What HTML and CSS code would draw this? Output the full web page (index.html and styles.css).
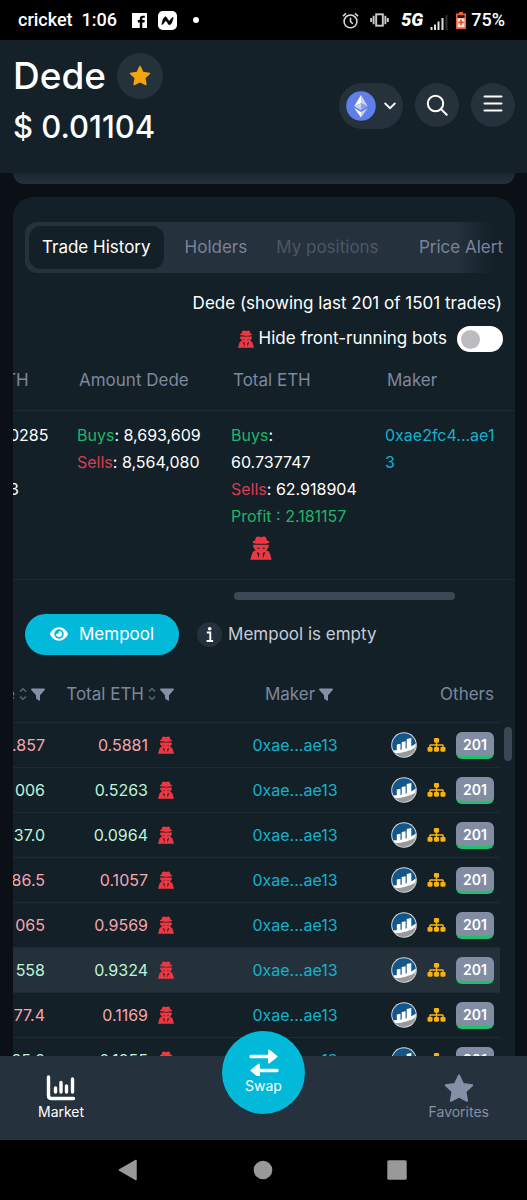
FILE: index.html
```html
<!DOCTYPE html>
<html lang="en">
<head>
<meta charset="utf-8">
<meta name="viewport" content="width=device-width, initial-scale=1">
<title>Dede $ 0.01104</title>
<link rel="stylesheet" href="styles.css">
</head>
<body>
<svg class="sprite" aria-hidden="true">
  <symbol id="spy" viewBox="0 0 16 18">
    <path d="M3.6 3.400C3.900 1.600 4.500.4 5.600.4c.8 0 1.600.5 2.400.5S9.600.4 10.400.4c1.100 0 1.700 1.200 2 3 1.100.2 1.900.7 1.900 1.200 0 .8-2.900 1.300-6.300 1.300s-6.300-.5-6.300-1.300c0-.5.8-1 1.900-1.200z"/>
    <path d="M2.200 6.600h11.600v1.600c0 .5-.3.900-.8.900-.2.900-.6 1.500-1.100 2l1.400.2c.9.600 1.400 1.700 1.700 2.900l1 3.600H0l1-3.600c.3-1.200.8-2.300 1.700-2.900l1.400-.2C3.600 10.600 3.200 10 3 9.100c-.5 0-.8-.4-.8-.9z"/>
    <path class="cut" d="M5 8.900h1.800v.6H5.300zM9.200 8.900H11l-.3.600H9.200zM4.800 11.800l1.900 1.200-.3 3.600zM11.200 11.800 9.300 13l.3 3.600z"/>
  </symbol>
  <symbol id="filter" viewBox="0 0 14 13"><path d="M1 .5h12c.9 0 1.200.9.700 1.500L9 7.200v4.900c0 .6-.6.9-1.100.5l-2.300-1.700c-.4-.3-.6-.7-.6-1.100V7.200L.3 2C-.2 1.400.1.5 1 .5z"/></symbol>
  <symbol id="sort" viewBox="0 0 8 14"><path d="M1 4.500 4 1.700l3 2.800M1 9.500l3 2.800 3-2.800"/></symbol>
  <symbol id="tree" viewBox="0 0 20 16">
    <rect x="7.300" y=".5" width="5.400" height="5" rx="1.200"/><rect x=".5" y="10" width="5.400" height="5" rx="1.200"/><rect x="7.300" y="10" width="5.400" height="5" rx="1.200"/><rect x="14.100" y="10" width="5.400" height="5" rx="1.200"/>
    <path d="M9.300 5h1.400v2.300h5.500c.9 0 1.500.6 1.500 1.500V10.500h-1.500V8.700h-5.500v1.800H9.300V8.700H3.800v1.800H2.300V8.800c0-.9.6-1.500 1.500-1.500h5.500z"/>
  </symbol>
  <symbol id="chart" viewBox="0 0 26 26">
    <circle cx="13" cy="13" r="12.800" fill="#d3dbe0"/><circle cx="13" cy="13" r="11.800" fill="#12568a"/>
    <path d="M2.300 18.200C8 18.500 18 17 24.700 11.500A11.800 11.800 0 0 1 3.500 20z" fill="#fff"/>
    <path d="M4.500 21.200C12 21 19.500 18.500 24.500 15.500A11.800 11.800 0 0 1 4.500 21.200z" fill="#999"/>
    <path d="M5.800 12.500l3.700-.7V19l-3.700.6zM10.700 10l3.900-.7v8.600l-3.900.8zM15.700 7l4.600-.9v9.500l-4.600 1.800z" fill="#fff"/>
  </symbol>
</svg>

<div class="status">
  <span>cricket</span><span class="time">1:06</span>
  <svg class="s-fb" viewBox="0 0 16 16"><path fill="#fff" d="M0 0h16v16h-5V10h2.200l.4-2.500H11V6.200c0-.8.400-1.200 1.200-1.200h1.500V2.800h-2C9.400 2.800 8.300 4 8.300 6v1.500H6.200V10h2.100v6H0z"/></svg>
  <svg class="s-news" viewBox="0 0 20 20"><rect width="20" height="20" rx="5" fill="#fff"/><path d="M4 14.500c.5-4 2-8.500 4-8.500 1.500 0 2.500 4.500 3.800 4.500.9 0 1.200-2.500 4.200-4-.5 4-2 8-4 8-1.500 0-2.500-4.300-3.800-4.300-1 0-1.500 3-4.200 4.300z" fill="#000" stroke="#000" stroke-width=".5"/></svg>
  <span class="s-dot"></span>
  <span class="grow"></span>
  <svg class="s-alarm" viewBox="0 0 18 18" fill="none" stroke="#ddd" stroke-width="1.600"><circle cx="9" cy="10" r="6.800"/><path d="M9 6.200V10l2.400 2.400M1 4.300l3.300-2.800M17 4.300l-3.300-2.800"/></svg>
  <svg class="s-vib" viewBox="0 0 20 14" fill="none" stroke="#ccc" stroke-width="2"><rect x="6.500" y="1" width="7" height="12"/><path d="M3.800 2.500v9M16.200 2.500v9M1.200 5v4M18.800 5v4"/></svg>
  <span class="net">5G</span>
  <svg class="s-sig" viewBox="0 0 18 16"><path d="M.5 13h2v3h-2zM4 10.500h2V16H4zM7.500 7.500h2V16h-2zM11.500 4h2v12h-2z" fill="#ddd"/><path d="M15.500 1h2v15h-2z" fill="#333"/></svg>
  <svg class="s-bat" viewBox="0 0 10 17"><path d="M3 0h4v1.500h3V17H0V1.500h3z" fill="#f0603c"/><path d="M1.500 3.200h7v3h-7z" fill="#311"/><path d="M1.500 6.200h7v9h-7z" fill="#ffe4d8"/><path d="M4.200 7.500h1.600v2h2v1.700h-2v2H4.200v-2h-2V9.500h2z" fill="#e5502c"/></svg>
  <span>75%</span>
</div>

<header class="header">
  <div class="token">
    <div class="name-row"><h1>Dede</h1>
      <button class="round star" aria-label="Favorite"><svg viewBox="0 0 22 22"><path d="M11 1.500l2.900 6 6.600.9-4.800 4.600 1.200 6.600L11 16.500l-5.900 3.100 1.200-6.600L1.500 8.400l6.600-.9z" fill="#f2a60d" stroke="#f2a60d" stroke-width="1.500" stroke-linejoin="round"/></svg></button>
    </div>
    <div class="price">$ 0.01104</div>
  </div>
  <div class="actions">
    <button class="chain" aria-label="Chain: Ethereum">
      <svg class="eth" viewBox="0 0 30 30"><circle cx="15" cy="15" r="14.800" fill="#627eea"/><path d="M15 4v8.200l-6.800 3z" fill="#fff"/><path d="M15 4v8.200l6.800 3z" fill="#c6d0f8"/><path d="M8.200 15.200l6.800-3v7z" fill="#c6d0f8"/><path d="M21.800 15.200l-6.800-3v7z" fill="#8da0ef"/><path d="M8.200 17l6.800 4v5.500z" fill="#fff"/><path d="M21.800 17 15 21v5.500z" fill="#c6d0f8"/></svg>
      <svg class="chev" viewBox="0 0 12 8"><path d="M1.200 1.500 6 6.200l4.800-4.700" fill="none" stroke="#fff" stroke-width="1.800" stroke-linecap="round"/></svg>
    </button>
    <button class="round" aria-label="Search"><svg viewBox="0 0 22 22" fill="none" stroke="#fff" stroke-width="2" stroke-linecap="round"><circle cx="9.500" cy="9.500" r="7.700"/><path d="M15.200 15.200l5.500 5.500"/></svg></button>
    <button class="round" aria-label="Menu"><svg viewBox="0 0 22 22" stroke="#fff" stroke-width="2" stroke-linecap="round"><path d="M2.500 2.500h17M2.500 9.500h17M2.500 16.500h17"/></svg></button>
  </div>
</header>

<main class="content">
  <div class="strip"></div>
  <section class="card">
    <nav class="tabs">
      <button class="tab active">Trade History</button><button class="tab">Holders</button><button class="tab dim" disabled>My positions</button><button class="tab">Price Alert</button>
    </nav>
    <p class="caption">Dede (showing last 201 of 1501 trades)</p>
    <label class="bots"><svg class="spy"><use href="#spy"/></svg><span>Hide front-running bots</span><input type="checkbox" class="switch"></label>

    <div class="clip">
      <table class="summary">
        <thead><tr><th class="c0">TH</th><th class="c1">Amount Dede</th><th class="c1">Total ETH</th><th>Maker</th></tr></thead>
        <tbody><tr>
          <td>0285<br><br>3</td>
          <td><span class="buy">Buys</span>: 8,693,609<br><span class="sell">Sells</span>: 8,564,080</td>
          <td><span class="buy">Buys</span>:<br>60.737747<br><span class="sell">Sells</span>: 62.918904<br><span class="buy">Profit : 2.181157</span><svg class="spy big"><use href="#spy"/></svg></td>
          <td><a href="#">0xae2fc4...ae1<br>3</a></td>
        </tr></tbody>
      </table>
    </div>
    <div class="hbar"><div class="hthumb"></div></div>

    <div class="mempool">
      <button class="mem-btn"><svg viewBox="0 0 18 14"><path fill="#fff" d="M9 .3c4.300 0 7.500 3.200 8.800 6.200.1.300.1.700 0 1C16.500 10.500 13.300 13.700 9 13.700S1.500 10.500.2 7.500c-.1-.3-.1-.7 0-1C1.500 3.500 4.700.3 9 .3z"/><circle cx="9" cy="7" r="4.700" fill="#02b9da"/><path fill="#fff" d="M9 4a3 3 0 1 1-3 3c1.500.3 3-1 3-3z"/></svg>Mempool</button>
      <svg class="info" viewBox="0 0 26 26"><circle cx="13" cy="13" r="13" fill="#25313c"/><circle cx="13.200" cy="7" r="1.900" fill="#fff"/><path d="M10.200 11h3.600v8.500M10 19.800h6.800" fill="none" stroke="#fff" stroke-width="2"/></svg>
      <span>Mempool is empty</span>
    </div>

    <div class="list">
      <div class="clip">
      <table class="trades">
        <thead><tr>
          <th class="t0"><span class="h">e<svg class="sort"><use href="#sort"/></svg><svg class="filter"><use href="#filter"/></svg></span></th>
          <th class="t1"><span class="h">Total ETH<svg class="sort"><use href="#sort"/></svg><svg class="filter"><use href="#filter"/></svg></span></th>
          <th class="t2"><span class="h mid">Maker<svg class="filter"><use href="#filter"/></svg></span></th>
          <th class="t3">Others</th>
        </tr></thead>
        <tbody>
          <tr class="red"><td>.857</td><td><span class="v">0.5881<svg class="spy"><use href="#spy"/></svg></span></td><td class="mk"><a href="#">0xae...ae13</a></td><td><span class="o"><svg class="chart"><use href="#chart"/></svg><svg class="tree"><use href="#tree"/></svg><b>201</b></span></td></tr>
          <tr class="green"><td>006</td><td><span class="v">0.5263<svg class="spy"><use href="#spy"/></svg></span></td><td class="mk"><a href="#">0xae...ae13</a></td><td><span class="o"><svg class="chart"><use href="#chart"/></svg><svg class="tree"><use href="#tree"/></svg><b>201</b></span></td></tr>
          <tr class="green"><td>37.0</td><td><span class="v">0.0964<svg class="spy"><use href="#spy"/></svg></span></td><td class="mk"><a href="#">0xae...ae13</a></td><td><span class="o"><svg class="chart"><use href="#chart"/></svg><svg class="tree"><use href="#tree"/></svg><b>201</b></span></td></tr>
          <tr class="red"><td>86.5</td><td><span class="v">0.1057<svg class="spy"><use href="#spy"/></svg></span></td><td class="mk"><a href="#">0xae...ae13</a></td><td><span class="o"><svg class="chart"><use href="#chart"/></svg><svg class="tree"><use href="#tree"/></svg><b>201</b></span></td></tr>
          <tr class="red"><td>065</td><td><span class="v">0.9569<svg class="spy"><use href="#spy"/></svg></span></td><td class="mk"><a href="#">0xae...ae13</a></td><td><span class="o"><svg class="chart"><use href="#chart"/></svg><svg class="tree"><use href="#tree"/></svg><b>201</b></span></td></tr>
          <tr class="green lit"><td>558</td><td><span class="v">0.9324<svg class="spy"><use href="#spy"/></svg></span></td><td class="mk"><a href="#">0xae...ae13</a></td><td><span class="o"><svg class="chart"><use href="#chart"/></svg><svg class="tree"><use href="#tree"/></svg><b>201</b></span></td></tr>
          <tr class="red"><td>77.4</td><td><span class="v">0.1169<svg class="spy"><use href="#spy"/></svg></span></td><td class="mk"><a href="#">0xae...ae13</a></td><td><span class="o"><svg class="chart"><use href="#chart"/></svg><svg class="tree"><use href="#tree"/></svg><b>201</b></span></td></tr>
          <tr class="green"><td>35.2</td><td><span class="v">0.1955<svg class="spy"><use href="#spy"/></svg></span></td><td class="mk"><a href="#">0xae...ae13</a></td><td><span class="o"><svg class="chart"><use href="#chart"/></svg><svg class="tree"><use href="#tree"/></svg><b>201</b></span></td></tr>
        </tbody>
      </table>
      </div>
      <div class="vbar"><div class="vthumb"></div></div>
    </div>
  </section>
</main>

<nav class="bottom">
  <a class="item on" href="#"><svg viewBox="0 0 30 26" fill="none" stroke="#fff" stroke-linecap="round" stroke-width="3.400"><path d="M2.500 2v18.500q0 3 3 3h22"/><path d="M9.500 13v4M15 7.500V17M20.500 11v6M26.500 4v13"/></svg>Market</a>
  <a class="swap" href="#"><svg viewBox="0 0 30 28"><path d="M2 8.500h18M10 22.500h18" stroke="#fff" stroke-width="3.400" stroke-linecap="round"/><path d="M20 2.500v12l7.500-6zM10 16.500v12l-7.500-6z" fill="#fff" stroke="#fff" stroke-width="2" stroke-linejoin="round"/></svg>Swap</a>
  <a class="item fav" href="#"><svg viewBox="0 0 30 28"><path d="M15 1.500l4 8.400 9.200 1.300-6.700 6.400 1.600 9.200L15 22.500l-8.100 4.300 1.600-9.200-6.700-6.400L11 9.900z" fill="#8490a8" stroke="#8490a8" stroke-width="2" stroke-linejoin="round"/></svg>Favorites</a>
</nav>

<div class="system">
  <button aria-label="Back"><svg viewBox="0 0 20 22"><path d="M18 1.500v19L1.500 11z" fill="#999" stroke="#999" stroke-width="1.500" stroke-linejoin="round"/></svg></button>
  <button aria-label="Home"><svg viewBox="0 0 20 22"><circle cx="10" cy="11" r="9.300" fill="#999"/></svg></button>
  <button aria-label="Recent apps"><svg viewBox="0 0 20 22"><rect x=".3" y="1.300" width="19.400" height="19.400" rx="1.500" fill="#999"/></svg></button>
</div>
</body>
</html>
```

FILE: styles.css
```css
* { box-sizing: border-box; }
body {
  margin: 0;
  height: 100vh;
  display: flex;
  flex-direction: column;
  overflow: hidden;
  background: #0a1016;
  color: #fff;
  font: 16px/27px Inter, "Open Sans", sans-serif;
}
button { border: 0; padding: 0; background: none; color: inherit; font: inherit; }
a { color: #14b1cc; text-decoration: none; }
svg { display: block; flex: none; }
.sprite { position: absolute; width: 0; height: 0; }

.status {
  height: 40px;
  flex: none;
  display: flex;
  align-items: center;
  padding: 0 22px 0 18px;
  background: #000;
  font: 500 18px/24px Roboto, sans-serif;
}
.time { margin-left: 9px; }
.grow { flex: 1; }
.s-fb { width: 15px; height: 15px; margin-left: 15px; }
.s-news { width: 19px; height: 19px; margin-left: 11px; }
.s-dot { width: 6px; height: 6px; margin-left: 16px; border-radius: 50%; background: #fff; }
.s-alarm { width: 17px; height: 17px; }
.s-vib { width: 19px; height: 14px; margin: 0 12px 0 11px; }
.net { font-style: italic; font-weight: 900; }
.s-sig { width: 18px; height: 16px; margin: 4px 8px 0 7px; }
.s-bat { width: 10px; height: 17px; margin-right: 5px; }

.header {
  height: 133px;
  flex: none;
  display: flex;
  justify-content: space-between;
  align-items: flex-start;
  padding: 13px 12px 0 13px;
  background: #152128;
}
.name-row { display: flex; align-items: center; gap: 11px; height: 46px; }
h1 { margin: 0; font-size: 37px; line-height: 46px; font-weight: 500; }
.price { margin-top: 8px; font-size: 31px; line-height: 40px; font-weight: 500; }
.round {
  width: 44px;
  height: 44px;
  display: grid;
  place-items: center;
  border-radius: 50%;
  background: #25313b;
}
.round svg { width: 22px; height: 22px; }
.star { width: 46px; height: 46px; }
.actions { display: flex; gap: 12px; padding-top: 30px; }
.chain {
  width: 64px;
  height: 46px;
  display: flex;
  align-items: center;
  justify-content: space-between;
  padding: 0 7px;
  border-radius: 23px;
  background: #25313b;
}
.eth { width: 30px; height: 30px; }
.chev { width: 12px; height: 8px; }

.content {
  flex: 1;
  min-height: 0;
  overflow: hidden;
  padding: 0 12px 0 13px;
}
.strip {
  height: 11px;
  margin-bottom: 13px;
  border-radius: 0 0 14px 14px;
  background: linear-gradient(#1a272f, #25323b);
}
.card { padding-top: 25px; border-radius: 20px; background: #142027; overflow: hidden; }
.tabs {
  height: 51px;
  display: flex;
  align-items: center;
  gap: 29px;
  margin: 0 12px;
  padding: 4px;
  border-radius: 12px;
  background: linear-gradient(90deg, #25313c 90%, #142027 98%);
  color: #78849a;
  font-size: 17px;
  white-space: nowrap;
}
.tab.active {
  height: 43px;
  margin-right: -8px;
  padding: 0 13px;
  border-radius: 12px;
  background: #142027;
  color: #fff;
}
.tab:last-child { margin: 0 -4px 0 auto; }
.dim { color: #4c5864; }
.caption { margin: 17px 13px 8px; font-size: 17px; text-align: right; }
.bots { display: flex; align-items: center; justify-content: flex-end; margin: 0 12px; gap: 5px; font-size: 17px; }
.spy { width: 16px; height: 18px; fill: #ee3742; }
.cut { fill: #142027; }
.switch {
  appearance: none;
  width: 46px;
  height: 26px;
  margin: 0 0 0 5px;
  padding: 4px;
  border-radius: 13px;
  background: #fff;
}
.switch::before {
  content: "";
  display: block;
  width: 19px;
  height: 19px;
  border-radius: 50%;
  background: #bdbbbd;
}

.clip { overflow: hidden; }
table { border-collapse: collapse; table-layout: fixed; }
th { font-size: 17px; font-weight: 400; color: #7d889d; white-space: nowrap; }
.summary { width: calc(100% + 8px); margin-left: -8px; text-align: left; }
.summary th { height: 58px; padding: 0 18px; border-bottom: 1px solid #1f2b34; }
.summary td { height: 169px; padding: 11px 0 0 16px; vertical-align: top; border-bottom: 1px solid #1f2b34; }
.summary .c0 { width: 56px; padding: 0; }
.summary td:first-child { padding-left: 4px; }
.c1 { width: 154px; }
.big { width: 22px; height: 24px; margin: 6px 0 0 19px; }
.buy { color: #20b56c; }
.sell { color: #d83c52; }
.hbar { padding: 12px 12% 14px 44%; }
.hthumb { height: 8px; border-radius: 4px; background: #3b4956; }

.mempool { display: flex; align-items: center; padding: 0 12px; color: #c6ccd8; font-size: 17px; }
.mem-btn {
  height: 41px;
  display: flex;
  align-items: center;
  gap: 11px;
  margin-right: 18px;
  padding: 0 25px;
  border-radius: 21px;
  background: #02b9da;
  color: #fff;
}
.mem-btn svg { width: 18px; height: 14px; }
.info { width: 25px; height: 25px; margin-right: 6px; }

.list { display: flex; }
.list .clip { flex: 1; }
.vbar { width: 15px; padding: 72px 3px 0 4px; }
.vthumb { width: 8px; height: 34px; border-radius: 4px; background: #3b4754; }
.trades { width: calc(100% + 40px); margin-left: -40px; }
.trades th { height: 68px; padding: 12px 0 0; text-align: right; }
.trades td { height: 45px; padding: 0; text-align: right; }
.trades tr { border-bottom: 1px solid #1f2b34; }
.t0 { width: 72px; }
.t1 { width: 129px; }
.t3 { width: 110px; }
.trades .t2 { padding-left: 34px; }
.trades .mk { padding-left: 26px; }
.trades .t3, .trades td:last-child { padding-right: 6px; }
.h, .v, .o { display: flex; align-items: center; justify-content: flex-end; }
.h { gap: 4px; }
.mid { justify-content: center; }
.v { gap: 10px; }
.o { gap: 10px; }
.trades .mk { text-align: center; }
.sort { width: 8px; height: 14px; fill: none; stroke: #5c6877; stroke-width: 1.4; }
.filter { width: 14px; height: 13px; fill: #8490a8; }
.chart { width: 26px; height: 26px; }
.tree { width: 19px; height: 16px; fill: #f9b212; }
.o b {
  width: 38px;
  height: 27px;
  border-radius: 6px;
  border-bottom: 3px solid #1fc06b;
  background: #828da4;
  color: #fff;
  font-size: 14px;
  line-height: 25px;
  font-weight: 600;
  text-align: center;
}
.red td { color: #f5a6b0; }
.green td { color: #bdf5d8; }
.lit { background: #24313b; }

.bottom {
  height: 84px;
  flex: none;
  display: grid;
  grid-template-columns: 1fr 83px 1fr;
  justify-items: start;
  padding: 0 38px;
  background: #25313c;
  font-size: 14px;
  line-height: 20px;
}
.item {
  display: flex;
  flex-direction: column;
  align-items: center;
  padding-top: 18px;
  gap: 1px;
  color: #8490a8;
  line-height: 18px;
}
.item svg { width: 30px; height: 28px; }
.item.on { color: #fff; }
.fav { justify-self: end; }
.swap {
  width: 83px;
  height: 83px;
  display: flex;
  flex-direction: column;
  align-items: center;
  margin-top: -25px;
  padding-top: 17px;
  border-radius: 50%;
  background: #02b9da;
  color: #fff;
  z-index: 1;
}
.swap svg { width: 30px; height: 28px; }

.system {
  height: 60px;
  flex: none;
  display: flex;
  align-items: center;
  justify-content: space-between;
  padding: 0 120px 0 118px;
  background: #000;
}
.system svg { width: 20px; height: 22px; }
```
